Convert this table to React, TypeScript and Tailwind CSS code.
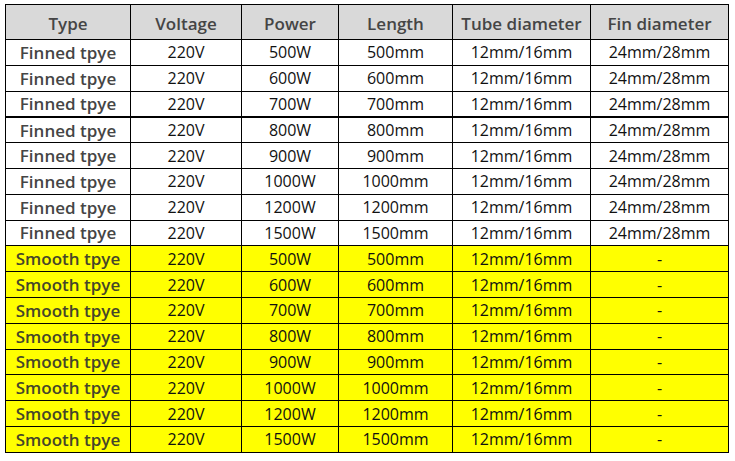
const finned = [
  ["500W", "500mm"],
  ["600W", "600mm"],
  ["700W", "700mm"],
  ["800W", "800mm"],
  ["900W", "900mm"],
  ["1000W", "1000mm"],
  ["1200W", "1200mm"],
  ["1500W", "1500mm"],
];

const headers = ["Type", "Voltage", "Power", "Length", "Tube diameter", "Fin diameter"];

export default function App() {
  const rows = [
    ...finned.map(([p, l]) => ({ type: "Finned tpye", power: p, length: l, fin: "24mm/28mm", smooth: false })),
    ...finned.map(([p, l]) => ({ type: "Smooth tpye", power: p, length: l, fin: "-", smooth: true })),
  ];

  return (
    <div className="w-[735px] h-[461px] bg-white pt-[4px] pl-[5px]" style={{ fontFamily: '"Open Sans", "Noto Sans", sans-serif' }}>
      <table className="table-fixed border-collapse w-[723px] text-center">
        <colgroup>
          <col className="w-[125px]" />
          <col className="w-[111px]" />
          <col className="w-[97px]" />
          <col className="w-[114px]" />
          <col className="w-[138px]" />
          <col className="w-[138px]" />
        </colgroup>
        <thead>
          <tr className="h-[35px] bg-[#d9d9d9]">
            {headers.map((h) => (
              <th key={h} className="border border-black text-[17px] font-semibold text-[#454545] leading-none p-0 pt-[2px]">
                {h}
              </th>
            ))}
          </tr>
        </thead>
        <tbody>
          {rows.map((r, i) => (
            <tr
              key={i}
              className={`h-[25.8px] ${r.smooth ? "bg-[#ffff00]" : "bg-white"} ${i === 2 ? "border-b-2 border-black" : ""}`}
            >
              <td className={`border border-black text-[17px] font-semibold leading-none p-0 ${r.smooth ? "text-[#45452a]" : "text-[#454545]"}`}>
                {r.type}
              </td>
              <td className="border border-black text-[16px] text-[#111] leading-none p-0">220V</td>
              <td className="border border-black text-[16px] text-[#111] leading-none p-0">{r.power}</td>
              <td className="border border-black text-[16px] text-[#111] leading-none p-0">{r.length}</td>
              <td className="border border-black text-[16px] text-[#111] leading-none p-0">12mm/16mm</td>
              <td className="border border-black text-[16px] text-[#111] leading-none p-0">{r.fin}</td>
            </tr>
          ))}
        </tbody>
      </table>
    </div>
  );
}
